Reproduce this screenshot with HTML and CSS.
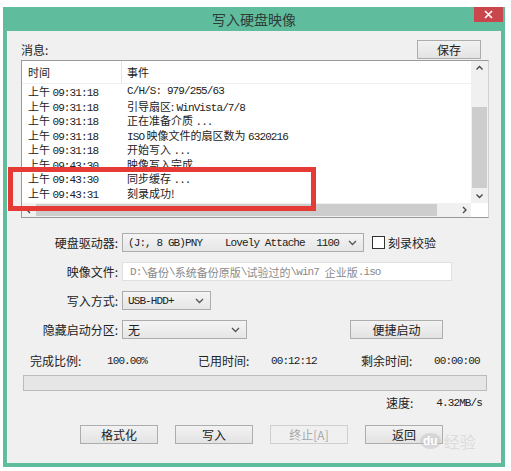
FILE: index.html
```html
<!DOCTYPE html>
<html lang="zh-CN">
<head>
    <meta charset="UTF-8">
    <title>写入硬盘映像</title>
    <link rel="stylesheet" href="styles.css">
</head>
<body>
    <div class="window">
        <div class="titlebar">
            写入硬盘映像
            <span class="close">
                <svg width="9" height="9" viewBox="0 0 9 9"><path d="M1 1L8 8M8 1L1 8" stroke="#fff" stroke-width="1.6"/></svg>
            </span>
        </div>

        <div class="content">
            <div class="msg-head">
                <span>消息:</span>
                <button class="btn save">保存</button>
            </div>

            <div class="log">
                <div class="log-head">
                    <div class="col-time">时间</div>
                    <div class="col-event">事件</div>
                </div>
                <div class="log-rows">
                    <div class="row"><div class="col-time">上午 <span class="mono">09:31:18</span></div><div class="col-event mono">C/H/S: 979/255/63</div></div>
                    <div class="row"><div class="col-time">上午 <span class="mono">09:31:18</span></div><div class="col-event">引导扇区: <span class="mono">WinVista/7/8</span></div></div>
                    <div class="row"><div class="col-time">上午 <span class="mono">09:31:18</span></div><div class="col-event">正在准备介质 <span class="mono">...</span></div></div>
                    <div class="row"><div class="col-time">上午 <span class="mono">09:31:18</span></div><div class="col-event"><span class="mono">ISO</span> 映像文件的扇区数为 <span class="mono">6320216</span></div></div>
                    <div class="row"><div class="col-time">上午 <span class="mono">09:31:18</span></div><div class="col-event">开始写入 <span class="mono">...</span></div></div>
                    <div class="row"><div class="col-time">上午 <span class="mono">09:43:30</span></div><div class="col-event">映像写入完成</div></div>
                    <div class="row"><div class="col-time">上午 <span class="mono">09:43:30</span></div><div class="col-event">同步缓存 <span class="mono">...</span></div></div>
                    <div class="row"><div class="col-time">上午 <span class="mono">09:43:31</span></div><div class="col-event">刻录成功!</div></div>
                </div>

                <div class="vscroll">
                    <svg class="arrow" width="17" height="14" viewBox="0 0 17 14"><path d="M5.5 8.5L8.5 5.5L11.5 8.5" fill="none" stroke="#444" stroke-width="1.3"/></svg>
                    <div class="vtrack"><div class="vthumb"></div></div>
                    <svg class="arrow" width="17" height="14" viewBox="0 0 17 14"><path d="M5.5 5.5L8.5 8.5L11.5 5.5" fill="none" stroke="#444" stroke-width="1.3"/></svg>
                </div>
                <div class="hscroll">
                    <svg class="arrow" width="14" height="14" viewBox="0 0 14 14"><path d="M8 4L5 7L8 10" fill="none" stroke="#444" stroke-width="1.3"/></svg>
                    <div class="hthumb"></div>
                    <div class="htrack"></div>
                    <svg class="arrow" width="14" height="14" viewBox="0 0 14 14"><path d="M6 4L9 7L6 10" fill="none" stroke="#444" stroke-width="1.3"/></svg>
                </div>
            </div>

            <div class="form">
                <div class="field">
                    <label>硬盘驱动器:</label>
                    <div class="select drive"><span class="mono">(J:, 8 GB)PNY&nbsp;&nbsp;&nbsp; Lovely Attache&nbsp; 1100</span><svg width="9" height="6" viewBox="0 0 9 6"><path d="M1 1L4.5 4.5L8 1" fill="none" stroke="#555" stroke-width="1.3"/></svg></div>
                    <span class="check"></span><span>刻录校验</span>
                </div>
                <div class="field">
                    <label>映像文件:</label>
                    <div class="input"><span class="mono">D:\</span>备份<span class="mono">\</span>系统备份原版<span class="mono">\</span>试验过的<span class="mono">\win7&nbsp; </span>企业版<span class="mono">.iso</span></div>
                </div>
                <div class="field">
                    <label>写入方式:</label>
                    <div class="select mode"><span class="mono">USB-HDD+</span><svg width="9" height="6" viewBox="0 0 9 6"><path d="M1 1L4.5 4.5L8 1" fill="none" stroke="#555" stroke-width="1.3"/></svg></div>
                </div>
                <div class="field">
                    <label>隐藏启动分区:</label>
                    <div class="select hidden"><span>无</span><svg width="9" height="6" viewBox="0 0 9 6"><path d="M1 1L4.5 4.5L8 1" fill="none" stroke="#555" stroke-width="1.3"/></svg></div>
                    <button class="btn quick">便捷启动</button>
                </div>
            </div>

            <div class="stats">
                <span>完成比例:</span><span class="val">100.00%</span>
                <span>已用时间:</span><span class="val">00:12:12</span>
                <span>剩余时间:</span><span class="val">00:00:00</span>
            </div>

            <div class="progress"></div>

            <div class="speed">
                <span>速度:</span><span class="val">4.32MB/s</span>
            </div>

            <div class="actions">
                <button class="btn">格式化</button>
                <button class="btn">写入</button>
                <button class="btn" disabled>终止[A]</button>
                <button class="btn">返回</button>
            </div>

            <div class="highlight"></div>
            <div class="stamp"><span class="du">du</span>经验</div>
        </div>
    </div>
</body>
</html>
```

FILE: styles.css
```css
body {
    margin: 0;
    background: #fff;
    font-family: "Noto Sans CJK SC", "Liberation Sans", sans-serif;
    color: #222;
}
.window {
    margin: 7px 0 0 3px;
    width: 502px;
    height: 460px;
    background: #5fbd9e;
    padding: 0 4px 4px;
    box-sizing: border-box;
    display: flex;
    flex-direction: column;
}
.titlebar {
    position: relative;
    height: 24px;
    line-height: 24px;
    text-align: center;
    font-size: 14px;
    color: #2e3b36;
}
.close {
    position: absolute;
    top: 0;
    right: -2px;
    width: 29px;
    height: 15px;
    background: #c9474c;
    display: flex;
    align-items: center;
    justify-content: center;
}
.content {
    position: relative;
    flex: 1;
    background: #f0f0f0;
    border-left: 1px solid #f8f8f8;
    font-size: 12px;
}
.mono {
    font-family: "Liberation Mono", "Noto Sans CJK SC", monospace;
    font-size: 11px;
    letter-spacing: -0.9px;
}

/* buttons */
.btn {
    font-family: inherit;
    font-size: 12px;
    color: #222;
    height: 19px;
    padding: 0;
    border: 1px solid #adadad;
    background: linear-gradient(#f2f2f2, #e3e3e3);
    line-height: 16px;
}
.btn:disabled {
    color: #a8a8a8;
    border-color: #cfcfcf;
    background: #f0f0f0;
}

/* message header */
.msg-head {
    display: flex;
    justify-content: space-between;
    align-items: center;
    margin: 9px 20px 1px 13px;
    height: 19px;
}
.save { width: 64px; }

/* log list */
.log {
    position: relative;
    margin-left: 13px;
    width: 468px;
    height: 158px;
    box-sizing: border-box;
    border: 1px solid #9a9a9a;
    border-right-color: #d0d0d0;
    background: #fff;
    font-size: 11px;
    overflow: hidden;
}
.log-head {
    display: flex;
    height: 22px;
    line-height: 22px;
    border-bottom: 1px solid #f0f0f0;
    width: 449px;
}
.log-head .col-time {
    border-right: 1px solid #e4e4e4;
}
.col-time {
    width: 100px;
    padding-left: 6px;
    box-sizing: border-box;
}
.col-event {
    padding-left: 5px;
    white-space: nowrap;
}
.log-rows {
    height: 120px;
    overflow: hidden;
}
.row {
    display: flex;
    height: 14.5px;
    line-height: 14.5px;
    white-space: nowrap;
}
.vscroll {
    position: absolute;
    right: 0;
    top: 0;
    width: 17px;
    height: 142px;
    display: flex;
    flex-direction: column;
    background: #f0f0f0;
}
.vtrack {
    flex: 1;
    padding-top: 32px;
}
.vthumb {
    height: 81px;
    margin: 0 1px;
    background: #cdcdcd;
}
.hscroll {
    position: absolute;
    left: 0;
    bottom: 0;
    width: 449px;
    height: 14px;
    display: flex;
    background: #f0f0f0;
}
.hthumb {
    width: 401px;
    margin: 1px 0;
    background: #cdcdcd;
}
.htrack { flex: 1; }

/* settings form */
.form {
    display: flex;
    flex-direction: column;
    gap: 10px;
    margin-top: 15px;
}
.field {
    display: flex;
    align-items: center;
    height: 19px;
}
.field label {
    width: 110px;
    text-align: right;
    margin-right: 4px;
}
.select, .input {
    height: 19px;
    box-sizing: border-box;
    border: 1px solid #acacac;
    background: linear-gradient(#f4f4f4, #e6e6e6);
    display: flex;
    align-items: center;
    justify-content: space-between;
    padding: 0 6px 0 5px;
    white-space: nowrap;
}
.drive { width: 242px; }
.mode { width: 89px; }
.hidden { width: 125px; }
.input {
    width: 330px;
    background: #fff;
    border-color: #e0e0e0;
    color: #8a8a8a;
    font-size: 11px;
    justify-content: flex-start;
    padding-left: 7px;
}
.check {
    width: 11px;
    height: 11px;
    border: 1px solid #333;
    background: #fff;
    margin: 0 3px 0 8px;
}
.quick {
    width: 93px;
    margin-left: 103px;
}

/* progress info */
.stats {
    display: grid;
    grid-template-columns: 77px 91px 73px 90px 73px auto;
    margin: 15px 0 0 22px;
    height: 14px;
    line-height: 14px;
}
.val {
    font-family: "Liberation Mono", monospace;
    font-size: 11px;
    letter-spacing: -0.9px;
}
.progress {
    margin: 7px 0 0 15px;
    width: 464px;
    height: 16px;
    box-sizing: border-box;
    border: 1px solid #bcbcbc;
    background: #e6e6e6;
}
.speed {
    display: flex;
    margin: 5px 0 0 378px;
    height: 14px;
    line-height: 14px;
}
.speed .val { margin-left: 23px; }
.actions {
    display: flex;
    gap: 17px;
    margin: 15px 0 0 72px;
}
.actions .btn { width: 78px; }

/* red frame drawn over the last log lines */
.highlight {
    position: absolute;
    left: 0;
    top: 136px;
    width: 308px;
    height: 44px;
    box-sizing: border-box;
    border: 5px solid #e63a37;
}

/* faint site watermark over the lower right corner */
.stamp {
    position: absolute;
    left: 412px;
    top: 398px;
    font-size: 16px;
    color: rgba(200, 200, 200, 0.5);
    display: flex;
    align-items: center;
    gap: 3px;
}
.stamp .du {
    font-family: "Liberation Sans", sans-serif;
    font-size: 12px;
    font-weight: bold;
    color: #fff;
    background: rgba(190, 190, 190, 0.45);
    border-radius: 50%;
    padding: 1px 3px;
}
```
